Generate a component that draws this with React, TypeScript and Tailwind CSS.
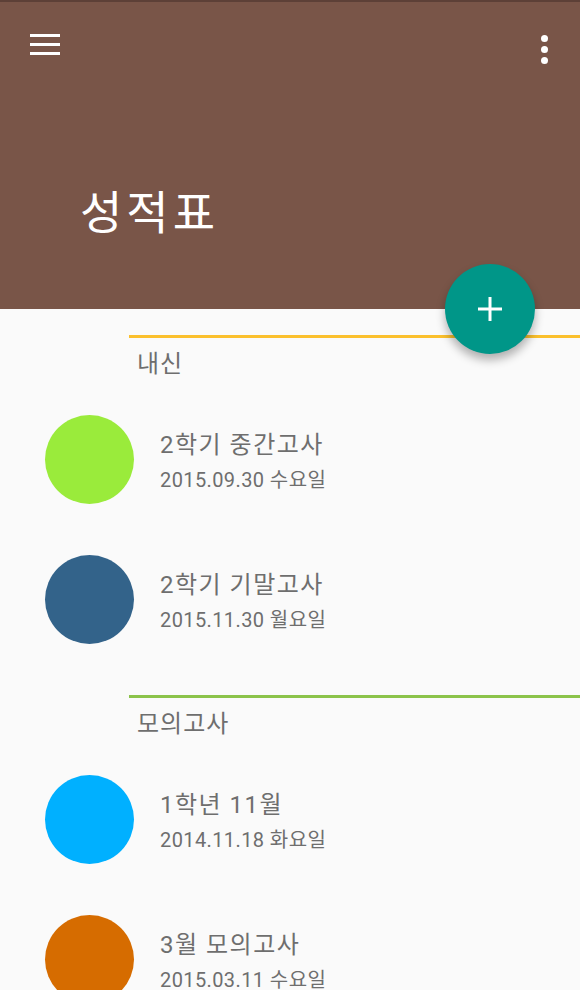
import React from "react";

type Item = { title: string; date: string; color: string };
type Section = { name: string; line: string; items: Item[] };

const sections: Section[] = [
  {
    name: "내신",
    line: "bg-[#fbc02d]",
    items: [
      { title: "2학기 중간고사", date: "2015.09.30 수요일", color: "bg-[#9aeb3b]" },
      { title: "2학기 기말고사", date: "2015.11.30 월요일", color: "bg-[#33638a]" },
    ],
  },
  {
    name: "모의고사",
    line: "bg-[#8bc34a]",
    items: [
      { title: "1학년 11월", date: "2014.11.18 화요일", color: "bg-[#00b0ff]" },
      { title: "3월 모의고사", date: "2015.03.11 수요일", color: "bg-[#d66c00]" },
    ],
  },
];

export default function App() {
  return (
    <div
      className="relative w-[580px] h-[990px] overflow-hidden bg-[#fafafa]"
      style={{ fontFamily: 'Roboto, "Noto Sans CJK KR", sans-serif' }}
    >
      <header className="h-[309px] bg-[#795548] flex flex-col">
        <div className="h-[2px] bg-[#5d4037]" />
        <div className="flex items-start justify-between pl-[30px] pr-[32px] pt-[32px]">
          <div className="flex flex-col gap-[6px] w-[30px]">
            <div className="h-[3px] bg-white" />
            <div className="h-[3px] bg-white" />
            <div className="h-[3px] bg-white" />
          </div>
          <div className="flex flex-col gap-[4px] items-center pt-[1px]">
            <div className="w-[7px] h-[7px] rounded-full bg-white" />
            <div className="w-[7px] h-[7px] rounded-full bg-white" />
            <div className="w-[7px] h-[7px] rounded-full bg-white" />
          </div>
        </div>
        <div className="pl-[80px] mt-[122px] text-white text-[46px] leading-[54px] tracking-[4px]">성적표</div>
      </header>

      <button className="absolute left-[445px] top-[264px] w-[90px] h-[90px] rounded-full bg-[#009688] flex items-center justify-center shadow-[0_6px_10px_rgba(0,0,0,0.3)]">
        <svg width="24" height="24" viewBox="0 0 24 24">
          <rect x="10.5" y="0" width="3" height="24" fill="white" />
          <rect x="0" y="10.5" width="24" height="3" fill="white" />
        </svg>
      </button>

      <main className="flex flex-col">
        {sections.map((s) => (
          <section key={s.name} className="mt-[26px] flex flex-col">
            <div className={`ml-[129px] h-[3px] ${s.line}`} />
            <div className="h-[51px] pl-[137px] flex items-center text-[24px] tracking-[1px] text-[#6e6e6e]">
              {s.name}
            </div>
            {s.items.map((it) => (
              <div key={it.title} className="h-[140px] flex items-center">
                <div className={`ml-[45px] w-[89px] h-[89px] rounded-full shrink-0 ${it.color}`} />
                <div className="ml-[26px] mt-[4px] flex flex-col">
                  <div className="text-[24px] leading-[30px] tracking-[1.5px] text-[#6e6e6e]">{it.title}</div>
                  <div className="mt-[7px] text-[20px] leading-[26px] tracking-[0.4px] text-[#6e6e6e]">{it.date}</div>
                </div>
              </div>
            ))}
          </section>
        ))}
      </main>
    </div>
  );
}
